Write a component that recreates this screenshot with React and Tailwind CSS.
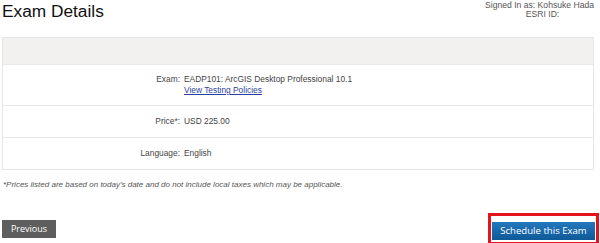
import React from "react";

const rows = [
  { label: "Price*:", value: "USD 225.00" },
  { label: "Language:", value: "English" },
];

export default function App() {
  return (
    <div className="w-[600px] h-[243px] bg-white text-[#444] overflow-hidden" style={{ fontFamily: '"Liberation Sans", Arial, sans-serif' }}>
      {/* Header */}
      <div className="flex justify-between items-start h-[37px]">
        <h1 className="text-[17.3px] leading-[20px] text-[#111] pl-[2px] pt-[1px]">Exam Details</h1>
        <div className="text-[8.6px] leading-[9px] text-[#555] text-center pr-[6px] pt-[1px]">
          <div>Signed In as: Kohsuke Hada</div>
          <div className="pl-[6px]">ESRI ID:</div>
        </div>
      </div>

      {/* Details panel */}
      <div className="mx-[2px] w-[592px] border border-[#e6e6e6]">
        <div className="h-[26px] bg-[#f2f1ef]" />
        <div className="flex h-[41px] border-t border-[#e8e8e8] pt-[9px]">
          <div className="w-[177px] text-right text-[8.4px] leading-[11px]">Exam:</div>
          <div className="pl-[4px] text-[8.4px] leading-[11px]">
            <div>EADP101: ArcGIS Desktop Professional 10.1</div>
            <a href="#" className="text-[#2b3fa0] underline">View Testing Policies</a>
          </div>
        </div>
        {rows.map((r) => (
          <div key={r.label} className="flex h-[32px] items-center border-t border-[#e8e8e8]">
            <div className="w-[177px] text-right text-[8.4px] leading-[11px]">{r.label}</div>
            <div className="pl-[4px] text-[8.4px] leading-[11px]">{r.value}</div>
          </div>
        ))}
      </div>

      <p className="text-[8px] italic text-[#555] pl-[3px] mt-[9px] leading-[11px]">
        *Prices listed are based on today's date and do not include local taxes which may be applicable.
      </p>

      {/* Buttons */}
      <div className="flex justify-between items-center mt-[23px] pl-[2px] pr-[1px]">
        <button className="h-[18px] w-[54px] bg-[#5e5e5e] text-white text-[9px] leading-[18px]" style={{ fontFamily: '"Open Sans", sans-serif' }}>Previous</button>
        <div className="border-[3px] border-[#e3141b] p-[1px]">
          <button className="h-[18px] w-[103px] bg-gradient-to-b from-[#2278bd] to-[#0f5a98] text-white text-[9.6px] leading-[18px]" style={{ fontFamily: '"Open Sans", sans-serif' }}>Schedule this Exam</button>
        </div>
      </div>
    </div>
  );
}
